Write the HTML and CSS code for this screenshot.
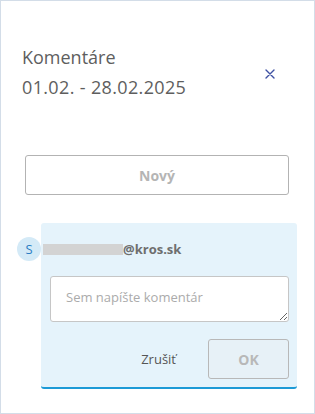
FILE: index.html
```html
<!DOCTYPE html>
<html lang="sk">
<head>
<meta charset="utf-8">
<link rel="stylesheet" href="styles.css">
</head>
<body>
<div class="panel">
  <div class="header">
    <div class="title">
      <div>Komentáre</div>
      <div class="date">01.02. - 28.02.2025</div>
    </div>
    <button class="close" aria-label="Zavrieť">
      <svg width="10" height="10" viewBox="0 0 10 10"><path d="M1 1L9 9M9 1L1 9" stroke="#3f51a3" stroke-width="1.4" stroke-linecap="round"/></svg>
    </button>
  </div>
  <button class="new-btn">Nový</button>
  <div class="card">
    <div class="avatar">S</div>
    <div class="author"><span class="masked"></span><span class="domain">@kros.sk</span></div>
    <textarea class="input" placeholder="Sem napíšte komentár"></textarea>
    <div class="actions">
      <button class="cancel">Zrušiť</button>
      <button class="ok">OK</button>
    </div>
  </div>
</div>
</body>
</html>
```
FILE: styles.css
```css
* { box-sizing: border-box; }
html, body { margin: 0; padding: 0; background: #fff; }
body { font-family: "Open Sans", "Noto Sans", sans-serif; }
.panel {
  width: 315px;
  height: 414px;
  border: 1px solid #d3dde8;
  padding: 41px 0 0 0;
}
.header {
  display: flex;
  justify-content: space-between;
  align-items: center;
  padding: 0 39px 0 21px;
}
.title {
  font-size: 18px;
  line-height: 30px;
  color: #5e5e5e;
}
.date { letter-spacing: 0.35px; }
.close {
  border: 0;
  background: none;
  padding: 0;
  width: 10px;
  height: 10px;
  display: flex;
  margin-top: 3px;
}
.new-btn {
  display: block;
  margin: 53px 0 0 24px;
  width: 264px;
  height: 40px;
  border: 1px solid #b3b3b3;
  border-radius: 3px;
  background: #fff;
  font-family: inherit;
  font-weight: 700;
  font-size: 14px;
  color: #b5b5b5;
}
.card {
  position: relative;
  margin: 28px 0 0 40px;
  width: 256px;
  height: 166px;
  background: #e5f3fb;
  border-radius: 3px;
  border-bottom: 2px solid #1d9ad6;
  padding: 14px 8px 0 9px;
}
.avatar {
  position: absolute;
  left: -24px;
  top: 14px;
  width: 24px;
  height: 24px;
  border-radius: 50%;
  background: #d4eaf7;
  color: #2a7dc4;
  font-size: 13px;
  line-height: 24px;
  text-align: center;
}
.author {
  display: flex;
  align-items: center;
  height: 24px;
  margin-left: -7px;
}
.masked {
  display: inline-block;
  width: 80px;
  height: 11px;
  background: #d3d3d3;
}
.domain {
  font-size: 13px;
  font-weight: 700;
  color: #6e6e6e;
}
.input {
  display: block;
  margin-top: 15px;
  width: 239px;
  height: 46px;
  border: 1px solid #c6c6c6;
  border-radius: 3px;
  background: #fff;
  padding: 11px 15px;
  font-family: inherit;
  font-size: 13px;
  color: #555;
  resize: vertical;
}
.input::placeholder { color: #ababab; }
.actions {
  display: flex;
  justify-content: flex-end;
  align-items: center;
  gap: 22px;
  margin-top: 17px;
}
.cancel {
  border: 0;
  background: none;
  font-family: inherit;
  font-size: 13px;
  color: #555;
  padding: 0 10px;
  height: 40px;
}
.ok {
  width: 81px;
  height: 40px;
  border: 1px solid #b8b8b8;
  border-radius: 3px;
  background: #e7f1f7;
  font-family: inherit;
  font-weight: 700;
  font-size: 14px;
  color: #b8b8b8;
}
```
